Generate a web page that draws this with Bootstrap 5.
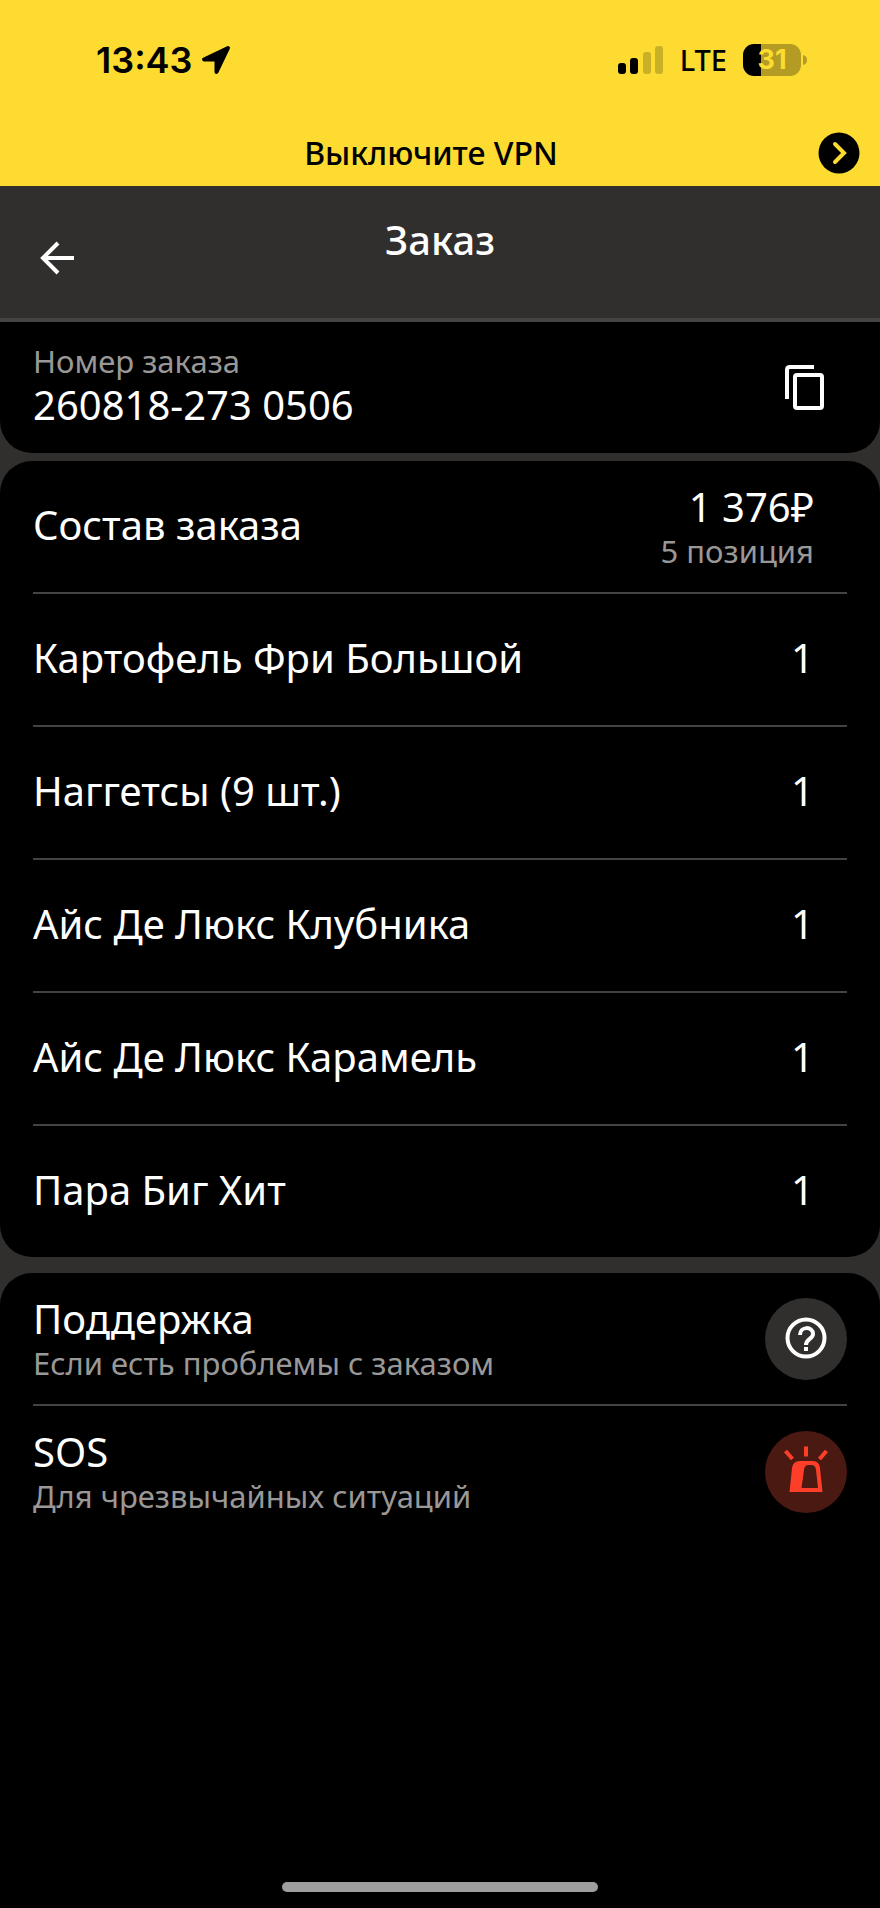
<!DOCTYPE html>
<html lang="ru">
<head>
<meta charset="utf-8">
<meta name="viewport" content="width=device-width, initial-scale=1">
<title>Заказ</title>
<link href="https://cdn.jsdelivr.net/npm/bootstrap@5.3.0/dist/css/bootstrap.min.css" rel="stylesheet">
<style>
  body { background: #000; color: #fff; font-family: "Noto Sans", sans-serif; }
  svg { display: block; flex: none; }
  .sun { background: #fddb30; color: #000; }
  .status-bar { height: 120px; padding: 0 72px 0 96px; }
  .clock { font: 600 36px/44px "Inter", sans-serif; }
  .network { font-size: 29px; line-height: 40px; font-weight: 500; }
  .battery { width: 58px; height: 32px; border-radius: 11px; background: linear-gradient(to right, #000 31%, #b39b24 31%); color: #fddb30; font: 700 27px/32px "Inter", sans-serif; }
  .vpn { height: 66px; padding: 0 20px; }
  .vpn-text { font-size: 32px; line-height: 40px; font-weight: 500; }
  .vpn-side { width: 24px; }
  .title-side { width: 35px; }
  .bare { background: none; border: 0; padding: 0; color: inherit; }
  .top-bar { background: #312f2e; height: 136px; border-bottom: 4px solid #444342; padding: 0 40px; }
  .top-bar .bare { padding-top: 12px; }
  .top-bar h1 { font-size: 40px; line-height: 48px; font-weight: 500; padding-bottom: 24px; }
  .sheet-area { background: #312f2e; }
  .panel { background: #000; padding: 0 33px; }
  .panel-first { border-radius: 0 0 32px 32px; }
  .panel-mid { border-radius: 32px; margin-top: 8px; }
  .panel-last { border-radius: 32px 32px 0 0; margin-top: 16px; }
  .line-row { height: 133px; border-bottom: 2px solid #444342; color: #fff; text-decoration: none; }
  .line-row:last-child { border-bottom: 0; height: 131px; }
  .line-row > .title-text { padding-bottom: 4px; }
  .panel-first .line-row { padding-bottom: 6px; }
  .copy { padding-top: 6px; margin-right: 18px; }
  .title-text { font-size: 40px; line-height: 48px; }
  .sub-text { font-size: 31px; line-height: 40px; color: #9a9897; }
  .amount { padding-right: 33px; }
  .home-bar { width: 36%; height: 10px; border-radius: 5px; background: #9e9e9e; margin-bottom: 16px; }
</style>
</head>
<body class="d-flex flex-column min-vh-100">
  <div class="sun">
    <div class="status-bar d-flex justify-content-between">
      <div class="d-flex align-items-center gap-2">
        <span class="clock">13:43</span>
        <svg width="30" height="30" viewBox="0 0 30 30"><path d="M27 3 3 14.500H15.500V27Z" fill="#000" stroke="#000" stroke-width="4" stroke-linejoin="round"/></svg>
      </div>
      <div class="d-flex align-items-center">
        <svg class="me-3" width="46" height="30" viewBox="0 0 46 30"><rect x="0" y="18" width="8" height="11" rx="3"/><rect x="12" y="13" width="8" height="16" rx="3"/><g fill="#cab026"><rect x="25" y="7" width="8" height="22" rx="3"/><rect x="37" y="1" width="8" height="28" rx="3"/></g></svg>
        <span class="network me-3">LTE</span>
        <span class="battery text-center">31</span>
        <svg width="7" height="12" viewBox="0 0 7 12"><path d="M2 1Q6 2 6 6T2 11Z" fill="#b39b24"/></svg>
      </div>
    </div>
    <div class="vpn d-flex align-items-center justify-content-between">
      <span class="vpn-side"></span>
      <span class="vpn-text">Выключите VPN</span>
      <button class="bare" type="button" aria-label="Открыть"><svg width="42" height="42" viewBox="0 0 42 42"><circle cx="21" cy="21" r="20.500"/><path d="m17 12 9 9-9 9" fill="none" stroke="#fddb30" stroke-width="4" stroke-linecap="round"/></svg></button>
    </div>
  </div>

  <header class="top-bar d-flex align-items-center justify-content-between">
    <button class="bare" type="button" aria-label="Назад"><svg width="35" height="36" viewBox="0 0 35 36"><path d="M34 18H3M18 3 3 18l15 15" fill="none" stroke="#fff" stroke-width="4"/></svg></button>
    <h1 class="m-0">Заказ</h1>
    <span class="title-side"></span>
  </header>

  <main class="sheet-area">
    <section class="panel panel-first">
      <div class="line-row d-flex align-items-center justify-content-between">
        <div><div class="sub-text">Номер заказа</div><div class="title-text">260818-273 0506</div></div>
        <button class="bare copy" type="button" aria-label="Скопировать номер"><svg width="50" height="50" viewBox="0 0 50 50" fill="none" stroke="#fff" stroke-width="4"><path d="M8 36V7q0-3 3-3h24"/><rect x="16" y="12" width="27" height="33" rx="2"/></svg></button>
      </div>
    </section>

    <section class="panel panel-mid">
      <ul class="list-unstyled m-0">
        <li class="line-row d-flex align-items-center justify-content-between"><span class="title-text">Состав заказа</span><div class="amount text-end"><div class="title-text">1 376₽</div><div class="sub-text">5 позиция</div></div></li>
        <li class="line-row d-flex align-items-center justify-content-between"><span class="title-text">Картофель Фри Большой</span><span class="title-text amount">1</span></li>
        <li class="line-row d-flex align-items-center justify-content-between"><span class="title-text">Наггетсы (9 шт.)</span><span class="title-text amount">1</span></li>
        <li class="line-row d-flex align-items-center justify-content-between"><span class="title-text">Айс Де Люкс Клубника</span><span class="title-text amount">1</span></li>
        <li class="line-row d-flex align-items-center justify-content-between"><span class="title-text">Айс Де Люкс Карамель</span><span class="title-text amount">1</span></li>
        <li class="line-row d-flex align-items-center justify-content-between"><span class="title-text">Пара Биг Хит</span><span class="title-text amount">1</span></li>
      </ul>
    </section>

    <section class="panel panel-last">
      <a class="line-row d-flex align-items-center justify-content-between" href="#support">
        <div><div class="title-text">Поддержка</div><div class="sub-text">Если есть проблемы с заказом</div></div>
        <svg width="82" height="82" viewBox="0 0 82 82"><circle cx="41" cy="41" r="41" fill="#312f2e"/><g fill="none" stroke="#fff" stroke-width="4"><circle cx="41" cy="40" r="18.500"/><path d="M35 37c0-9 13-9 13-1 0 5-7 5-7 11"/></g><path d="M39 49h4v4h-4z" fill="#fff"/></svg>
      </a>
      <a class="line-row d-flex align-items-center justify-content-between" href="#sos">
        <div><div class="title-text">SOS</div><div class="sub-text">Для чрезвычайных ситуаций</div></div>
        <svg width="82" height="82" viewBox="0 0 82 82"><circle cx="41" cy="41" r="41" fill="#491912"/><path fill="#fd3f2a" fill-rule="evenodd" d="M24.500 61 27 37q1-7 8-7h13q6 0 7 7l2.500 24ZM36.500 57h16.500L51 39q-.5-5-4.500-5h-3q-4 0-4.500 5Z"/><path d="M41 15.500v10M20.500 20l7 8M61.500 20l-7 8" stroke="#fd3f2a" stroke-width="4"/></svg>
      </a>
    </section>
  </main>

  <div class="home-bar mt-auto mx-auto"></div>
<script src="https://cdn.jsdelivr.net/npm/bootstrap@5.3.0/dist/js/bootstrap.bundle.min.js"></script>
</body>
</html>
